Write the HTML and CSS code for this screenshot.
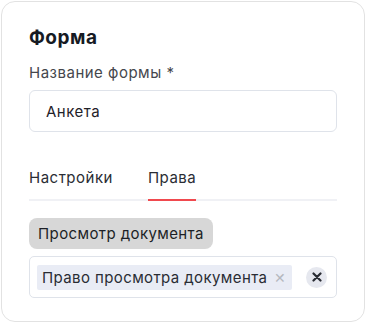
FILE: index.html
```html
<!DOCTYPE html>
<html lang="ru">
<head>
  <meta charset="UTF-8" />
  <meta name="viewport" content="width=device-width, initial-scale=1.0"/>
  <title>Форма</title>
  <link rel="stylesheet" href="styles.css">
</head>
<body>
  <div class="card">
    <h2 class="title">Форма</h2>
    <label class="label" for="formName">Название формы *</label>
    <input class="text-input" id="formName" type="text" value="Анкета" />

    <div class="tabs">
      <div class="tab">Настройки</div>
      <div class="tab active">Права</div>
    </div>

    <div class="group-chip">Просмотр документа</div>

    <div class="multi">
      <span class="tag">Право просмотра документа <span class="tag-x">&#x2715;</span></span>
      <span class="clear">
        <svg width="10" height="10" viewBox="0 0 10 10"><path d="M1.5 1.5 L8.5 8.5 M8.5 1.5 L1.5 8.5" stroke="#2a2d34" stroke-width="2.2" stroke-linecap="round"/></svg>
      </span>
    </div>
  </div>
</body>
</html>
```

FILE: styles.css
```css
body {
  margin: 0;
  font-family: Inter, "Noto Sans", sans-serif;
  background: #fff;
  color: #1f2229;
}

.card {
  margin: 1px;
  height: 321px;
  box-sizing: border-box;
  border: 1px solid #e2e2e2;
  border-radius: 14px;
  padding: 24px 27px 0;
}

.title {
  margin: 0 0 14px;
  font-size: 19px;
  font-weight: 700;
  letter-spacing: 0.5px;
  color: #161a23;
}

.label {
  display: block;
  font-size: 15px;
  letter-spacing: 0.5px;
  color: #45474d;
  margin-bottom: 8px;
}

.text-input {
  display: block;
  width: 100%;
  height: 42px;
  box-sizing: border-box;
  border: 1px solid #dfe3ea;
  border-radius: 6px;
  padding: 0 16px;
  font-family: inherit;
  font-size: 15px;
  letter-spacing: 0.5px;
  color: #1f2229;
  outline: none;
}

.tabs {
  display: flex;
  gap: 35px;
  margin-top: 36px;
  border-bottom: 2px solid #f0f1f5;
}

.tab {
  font-size: 15px;
  letter-spacing: 0.5px;
  color: #2a2d34;
  padding-bottom: 12px;
  margin-bottom: -2px;
}

.tab.active {
  border-bottom: 2px solid #f0494e;
}

.group-chip {
  display: inline-block;
  margin-top: 17px;
  background: #d7d7d7;
  border-radius: 8px;
  padding: 6px 9px;
  font-size: 15px;
  letter-spacing: 0.4px;
  color: #1c1f26;
}

.multi {
  display: flex;
  align-items: center;
  justify-content: space-between;
  margin-top: 7px;
  height: 42px;
  box-sizing: border-box;
  border: 1px solid #dfe3ea;
  border-radius: 5px;
  padding: 0 9px 0 7px;
}

.tag {
  background: #e9ecf5;
  padding: 3px 6px 3px 5px;
  font-size: 15px;
  letter-spacing: 0.4px;
  color: #2a2d34;
  border-radius: 2px;
}

.tag-x {
  color: #b5b8bf;
  font-size: 14px;
  margin-left: 2px;
}

.clear {
  width: 21px;
  height: 21px;
  border-radius: 50%;
  background: #e6e8ef;
  display: flex;
  align-items: center;
  justify-content: center;
}
```
